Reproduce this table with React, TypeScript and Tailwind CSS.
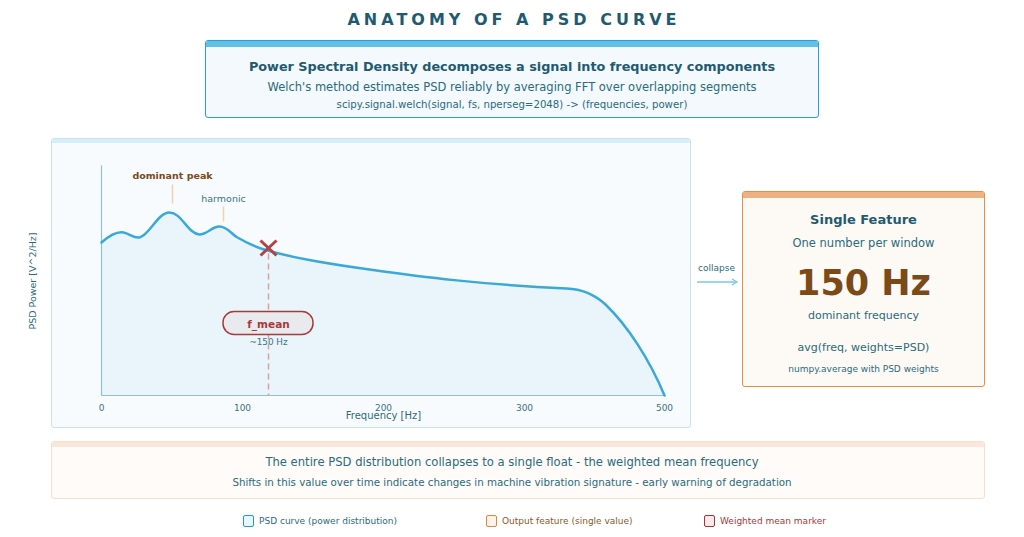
import React from "react";

const curve =
  "M102,243 C110,236 118,232 124,233 C130,234 134,239 140,238 C150,236 158,213 170,213 C182,213 188,234 200,235 C208,235 212,227 220,227 C228,227 232,235 238,238 C250,245 260,249 268,251 C300,260 340,266 370,270 C420,277 480,285 567,289 C580,289.5 594,294 606,305 C628,326 650,360 665,396";

const PsdChart = () => (
  <svg width="637" height="283" viewBox="52.5 143.5 637 283" className="block">
    <path d={curve + " L665,396 L102,396 Z"} fill="#eaf5fb" />
    {/* axes */}
    <line x1="102" y1="166" x2="102" y2="396" stroke="#8fc3c9" strokeWidth="1.2" />
    <line x1="102" y1="396" x2="666" y2="396" stroke="#8fc3c9" strokeWidth="1.2" />
    <path d={curve} fill="none" stroke="#3aa8d8" strokeWidth="2.5" strokeLinecap="round" />

    {/* annotations */}
    <text x="173" y="179" textAnchor="middle" fontSize="9.5" fontWeight="bold" fill="#7a4a1a">
      dominant peak
    </text>
    <line x1="173" y1="185" x2="173" y2="204" stroke="#f5cfae" strokeWidth="1.5" />
    <text x="224" y="202" textAnchor="middle" fontSize="9.5" fill="#3a7482">
      harmonic
    </text>
    <line x1="224" y1="207" x2="224" y2="222" stroke="#f5cfae" strokeWidth="1.5" />

    {/* weighted mean */}
    <line x1="269" y1="254" x2="269" y2="396" stroke="#d5a2a4" strokeWidth="1.5" strokeDasharray="6 4" />
    <path d="M261,241 L277,256 M277,241 L261,256" stroke="#b04444" strokeWidth="3" />
    <rect x="223.5" y="312" width="90" height="23" rx="11" fill="#e8eaee" stroke="#a83a3a" strokeWidth="1.5" />
    <text x="269" y="328.5" textAnchor="middle" fontSize="10.5" fontWeight="bold" fill="#a83a3a">
      f_mean
    </text>
    <text x="269" y="345" textAnchor="middle" fontSize="8.8" fill="#3a7482">
      ~150 Hz
    </text>

    {/* ticks */}
    {[
      [102, "0"],
      [243, "100"],
      [384, "200"],
      [525, "300"],
      [665, "500"],
    ].map(([x, t]) => (
      <text key={t} x={x} y="411.5" textAnchor="middle" fontSize="9" fill="#3a7482">
        {t}
      </text>
    ))}
    <text x="384" y="419.5" textAnchor="middle" fontSize="10" fill="#2f6a7c">
      Frequency [Hz]
    </text>
  </svg>
);

const LegendItem = ({ box, color, label, width }: { box: string; color: string; label: string; width: string }) => (
  <div className={`flex items-center gap-[5px] ${width}`}>
    <span className={`w-[11px] h-[12px] rounded-[2px] border-[1.5px] ${box}`} />
    <span className={`text-[9px] leading-[12px] ${color}`}>{label}</span>
  </div>
);

export default function App() {
  return (
    <div className="w-[1024px] h-[537px] overflow-hidden bg-white flex flex-col font-['DejaVu_Sans','Liberation_Sans',sans-serif] text-[#2a6b7c]">
      <h1 className="pt-[10px] pl-[4px] text-center text-[16px] leading-[19px] font-bold tracking-[4px] text-[#1f5b70]">
        ANATOMY OF A PSD CURVE
      </h1>

      <div className="mt-[11px] ml-[205px] w-[614px] h-[78px] rounded-[3px] border-[1.5px] border-[#2aa0d8] bg-[#f3f9fc] overflow-hidden flex flex-col items-center">
        <div className="w-full h-[5.5px] bg-[#63bfe6]" />
        <p className="mt-[12px] text-[12.8px] leading-[16px] font-bold text-[#1f5b70]">
          Power Spectral Density decomposes a signal into frequency components
        </p>
        <p className="mt-[5.5px] text-[11.5px] leading-[15px]">
          Welch's method estimates PSD reliably by averaging FFT over overlapping segments
        </p>
        <p className="mt-[3px] text-[10.2px] leading-[13px]">
          scipy.signal.welch(signal, fs, nperseg=2048) -&gt; (frequencies, power)
        </p>
      </div>

      <div className="mt-[20px] flex h-[290px]">
        <div className="w-[51px] flex items-center justify-end pr-[12px] pb-[4px]">
          <span className="-rotate-90 whitespace-nowrap text-[9.5px] leading-[12px] w-[12px] flex justify-center">
            PSD Power [V^2/Hz]
          </span>
        </div>

        <div className="w-[640px] h-[290px] rounded-[3px] border-[1.5px] border-[#c4e4f2] bg-[#f7fbfd] overflow-hidden">
          <div className="h-[4px] bg-[#d6eef8]" />
          <PsdChart />
        </div>

        <div className="w-[51px] flex flex-col items-center pt-[124.5px]">
          <span className="text-[9px] leading-[11px]">collapse</span>
          <svg width="43" height="8" viewBox="0 0 43 8" className="mt-[4.5px] ml-[2px]">
            <line x1="1" y1="4" x2="40" y2="4" stroke="#7cc6ea" strokeWidth="1.3" />
            <path d="M36,1 L41,4 L36,7" fill="none" stroke="#7cc6ea" strokeWidth="1.3" />
          </svg>
        </div>

        <div className="mt-[53px] w-[243px] h-[196px] rounded-[3px] border-[1.5px] border-[#e2903f] bg-[#fdf9f5] overflow-hidden flex flex-col items-center">
          <div className="w-full h-[5.5px] bg-[#ecb283]" />
          <p className="mt-[14px] text-[13px] leading-[16px] font-bold text-[#1f5b70]">Single Feature</p>
          <p className="mt-[8.5px] text-[11.5px] leading-[15px]">One number per window</p>
          <p className="mt-[11.5px] text-[35px] leading-[40px] font-bold text-[#7b4a17]">150 Hz</p>
          <p className="mt-[6px] text-[11px] leading-[14px]">dominant frequency</p>
          <p className="mt-[18px] text-[11px] leading-[14px]">avg(freq, weights=PSD)</p>
          <p className="mt-[9.5px] text-[9px] leading-[11px]">numpy.average with PSD weights</p>
        </div>
      </div>

      <div className="mt-[13px] ml-[51px] w-[934px] h-[58px] rounded-[3px] border-[1.5px] border-[#f7dfca] bg-[#fefbf8] overflow-hidden flex flex-col items-center pr-[12px]">
        <div className="w-[934px] h-[4.5px] bg-[#f9e8da] self-start" />
        <p className="mt-[8px] text-[11.6px] leading-[15px]">
          The entire PSD distribution collapses to a single float - the weighted mean frequency
        </p>
        <p className="mt-[6px] text-[10.3px] leading-[13px]">
          Shifts in this value over time indicate changes in machine vibration signature - early warning of degradation
        </p>
      </div>

      <div className="mt-[16px] ml-[243px] flex">
        <LegendItem width="w-[243px]" box="border-[#1a9ad6] bg-[#eaf6fd]" color="text-[#2a6b7c]" label="PSD curve (power distribution)" />
        <LegendItem width="w-[218px]" box="border-[#e0873a] bg-[#fdf3ea]" color="text-[#8a5a2a]" label="Output feature (single value)" />
        <LegendItem width="w-[200px]" box="border-[#a83232] bg-[#f7eaea]" color="text-[#a33a3a]" label="Weighted mean marker" />
      </div>
    </div>
  );
}
